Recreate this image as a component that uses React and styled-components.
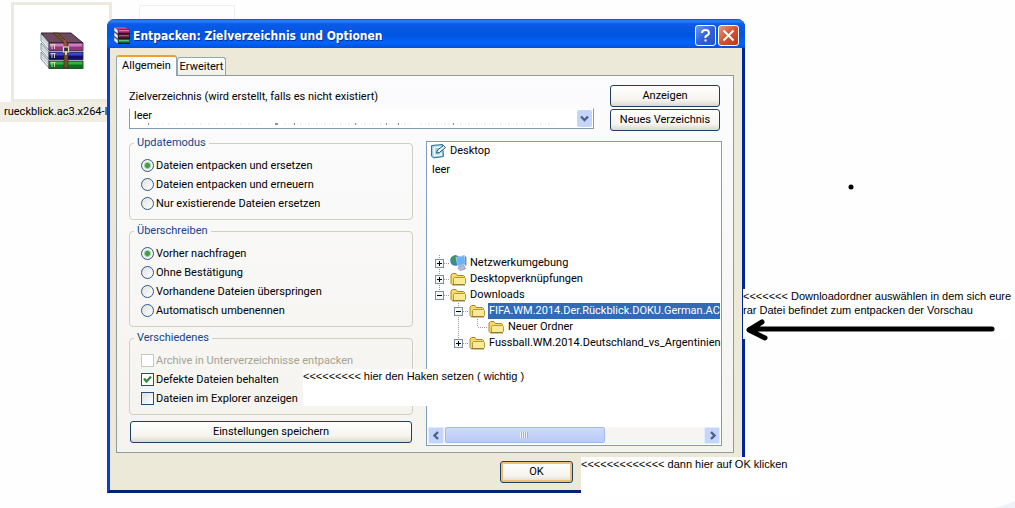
import React from 'react';
import styled, { createGlobalStyle, css } from 'styled-components';

const GlobalStyle = createGlobalStyle`
  * {
    box-sizing: border-box;
  }

  body {
    margin: 0;
    background: #fefefe;
    color: #000;
    font-family: Roboto, sans-serif;
    font-size: 11px;
    line-height: 14px;
    overflow: hidden;
  }

  button, input, select {
    font: inherit;
    color: inherit;
    margin: 0;
  }
`;

const Desktop = styled.main`
  position: relative;
  min-height: 100vh;
  padding: 19px 270px 14px 107px;
`;

const FileItem = styled.div`
  position: absolute;
  left: 0;
  top: 2px;
  width: 124px;
`;

const FileThumb = styled.div`
  display: flex;
  align-items: center;
  justify-content: center;
  width: 101px;
  height: 100px;
  margin-left: 11px;
  padding-bottom: 4px;
  border: 3px solid #eceadf;
  background: #fff;
`;

const FileName = styled.div`
  padding: 3px 4px;
  background: #f0eee4;
  white-space: nowrap;
  overflow: hidden;
`;

const GhostThumb = styled.div`
  position: absolute;
  left: 139px;
  top: 5px;
  width: 96px;
  height: 90px;
  border: 1px solid #f1f0ea;
`;

const CornerArt = styled.svg`
  position: absolute;
  right: 0;
  bottom: 0;
`;

const Dialog = styled.section`
  position: relative;
  border: 3px solid #0a3fc4;
  border-top: 0;
  border-right-color: #00259a;
  border-bottom-color: #00207c;
  border-radius: 8px 8px 0 0;
  background: #ece9d8;
`;

const TitleBar = styled.header`
  display: flex;
  align-items: center;
  gap: 2px;
  height: 29px;
  margin: 0 -3px;
  padding: 4px 6px 0 7px;
  border-radius: 8px 8px 0 0;
  background: linear-gradient(#0a4fc4 0, #2a86f8 2px, #0a5be6 5px, #0055e0 16px, #0463fb 24px, #0350d8 100%);
`;

const Title = styled.h1`
  flex: 1;
  margin: 0 0 0 1px;
  color: #fff;
  font-family: "DejaVu Sans Condensed", "DejaVu Sans", sans-serif;
  font-size: 12px;
  font-weight: 700;
  line-height: 18px;
  text-shadow: 1px 1px #0a318c;
  white-space: nowrap;
`;

const CaptionButton = styled.button`
  display: flex;
  width: 21px;
  height: 21px;
  padding: 0;
  align-items: center;
  justify-content: center;
  border: 1px solid #fff;
  border-radius: 3px;
  background: ${props => props.$close
    ? 'linear-gradient(135deg, #e89a84, #d9502e 50%, #b93a1c)'
    : 'linear-gradient(135deg, #6a9cf0, #2e62d8 50%, #2553c4)'};
`;

const Body = styled.div`
  padding: 7px 8px 0 6px;
`;

const Tabs = styled.div`
  display: flex;
  align-items: flex-end;
  height: 20px;
`;

const Tab = styled.button`
  min-width: 49px;
  height: 18px;
  padding: 1px 0 0;
  border: 1px solid #91a7b4;
  border-bottom: 0;
  border-radius: 3px 3px 0 0;
  background: linear-gradient(#fff, #f0f0ea);

  ${props => props.$active && css`
    z-index: 1;
    min-width: 61px;
    height: 21px;
    margin-bottom: -1px;
    padding: 0 0 2px;
    border-top: 2px solid #efa02c;
    background: #fcfcfe;
  `}
`;

const Panel = styled.div`
  padding: 9px 11px 6px 12px;
  border: 1px solid #919b9c;
  background: linear-gradient(#fcfcfe, #f4f3ee);
`;

const TargetRow = styled.div`
  display: flex;
  justify-content: space-between;
  gap: 16px;
  padding-right: 2px;
`;

const TargetField = styled.div`
  flex: 1;
  display: flex;
  flex-direction: column;
  gap: 4px;
  padding-top: 5px;
`;

const Combo = styled.div`
  position: relative;
  height: 21px;
  border: 1px solid #7f9db9;
  border-top-color: #fcfcfe;
  background: #fff;
`;

const ComboSelect = styled.select`
  display: block;
  width: 100%;
  height: 19px;
  padding: 0 20px 5px 4px;
  border: 0;
  background: transparent;
  appearance: none;
  outline: 0;
`;

const ComboArrow = styled.span`
  position: absolute;
  top: 1px;
  right: 1px;
  display: flex;
  align-items: center;
  justify-content: center;
  width: 15px;
  height: 17px;
  border-radius: 2px;
  background: #c5d4fa;
  pointer-events: none;
`;

const ComboSpecks = styled.svg`
  position: absolute;
  left: 4px;
  bottom: 3px;
  pointer-events: none;
`;

const SideButtons = styled.div`
  display: flex;
  flex-direction: column;
  gap: 2px;
  width: 110px;
`;

const PushButton = styled.button`
  height: 22px;
  padding: 0 8px;
  border: 1px solid #1c3f66;
  border-radius: 3px;
  background: linear-gradient(#fff, #f5f4ef 70%, #dcd8cc);
  box-shadow: inset 0 0 0 ${props => (props.$primary ? '2px #eec070' : '0 transparent')};
  text-align: center;
`;

const SaveButton = styled(PushButton)`
  margin: 2px 1px 0;
`;

const Columns = styled.div`
  display: grid;
  grid-template-columns: minmax(0, 284fr) minmax(0, 296fr);
  gap: 13px;
  padding-top: 5px;
`;

const Options = styled.div`
  display: flex;
  flex-direction: column;
  gap: 4px;
  padding-bottom: 3px;
`;

const Group = styled.fieldset`
  margin: 0;
  padding: 6px 11px 6px;
  border: 1px solid #d0d0bf;
  border-radius: 4px;
`;

const Legend = styled.legend`
  margin-left: -7px;
  padding: 0 3px;
  color: #14458c;
`;

const Choice = styled.label`
  display: flex;
  align-items: center;
  gap: 2px;
  height: 19px;
  color: ${props => (props.$disabled ? '#a5a392' : '#000')};
  white-space: nowrap;
`;

const Radio = styled.input`
  appearance: none;
  width: 13px;
  height: 13px;
  border: 1px solid #33597f;
  border-radius: 50%;
  background: linear-gradient(135deg, #dfe2e2, #fff);

  &:checked {
    background: radial-gradient(circle, #3f9c48 0 2px, #a5d0a4 3px, #eef4ee 4px);
  }
`;

const Check = styled.input`
  appearance: none;
  width: 13px;
  height: 13px;
  border: 1px solid ${props => (props.disabled ? '#cac8bb' : '#1c5180')};
  background: ${props => (props.disabled ? '#fff' : 'linear-gradient(135deg, #dcdfdf, #fff)')};

  &:checked {
    background: #fff url("data:image/svg+xml,%3Csvg xmlns='http://www.w3.org/2000/svg' width='11' height='11'%3E%3Cpath d='M2 4.5l2.5 3L9 2.5' fill='none' stroke='%232f8a3c' stroke-width='2.2'/%3E%3C/svg%3E");
  }
`;

const TreeBox = styled.div`
  display: flex;
  flex-direction: column;
  margin-top: 5px;
  padding: 1px;
  border: 1px solid #7f9db9;
  background: #fff;
`;

const Tree = styled.ul`
  flex: 1;
  margin: 0;
  padding: 0;
  list-style: none;
`;

const TreeRow = styled.li`
  display: flex;
  align-items: center;
  height: 16px;
  padding-left: ${props => (props.$root ? '2px' : '7px')};
  white-space: nowrap;

  svg {
    flex: none;
  }
`;

const TreeLabel = styled.span`
  flex: ${props => (props.$selected ? 1 : 'none')};
  margin-left: 2px;
  padding: 1px 0 1px 1px;
  color: ${props => (props.$selected ? '#fff' : '#000')};
  background: ${props => (props.$selected ? '#316ab5' : 'transparent')};
`;

const TreeBlank = styled.li`
  height: 96px;
  padding: 4px;
`;

const ScrollBar = styled.div`
  display: flex;
  gap: 1px;
  height: 17px;
  background: #f6f5f1;
`;

const ScrollButton = styled.button`
  display: flex;
  align-items: center;
  justify-content: center;
  width: 16px;
  padding: 0;
  border: 1px solid #e4ebfd;
  border-radius: 2px;
  background: #c4d4fb;
`;

const ScrollTrack = styled.div`
  flex: 1;
`;

const ScrollThumb = styled.div`
  display: flex;
  align-items: center;
  justify-content: center;
  width: 62%;
  height: 16px;
  border: 1px solid #a4baec;
  border-radius: 2px;
  background: linear-gradient(#cbdafd, #b9cbf5);
`;

const Footer = styled.footer`
  display: flex;
  justify-content: flex-end;
  height: 37px;
  padding: 8px 169px 7px 0;

  button {
    width: 73px;
  }
`;

const Note = styled.p`
  position: absolute;
  margin: 0;
  background: #fff;
  font-family: "Liberation Sans", sans-serif;
  white-space: nowrap;
`;

const KeepNote = styled(Note)`
  left: 193px;
  top: 350px;
  width: 224px;
  height: 37px;
`;

const FolderNote = styled(Note)`
  left: 100%;
  top: 270px;
  margin-left: 1px;
  height: 50px;
`;

const OkNote = styled(Note)`
  left: 471px;
  top: 438px;
  width: 220px;
  height: 40px;
`;

const Sketch = styled.svg`
  position: absolute;
  left: 100%;
  top: 160px;
`;

const updateModes = ['Dateien entpacken und ersetzen', 'Dateien entpacken und erneuern', 'Nur existierende Dateien ersetzen'];
const overwriteModes = ['Vorher nachfragen', 'Ohne Bestätigung', 'Vorhandene Dateien überspringen', 'Automatisch umbenennen'];
const misc = [
  { label: 'Archive in Unterverzeichnisse entpacken', disabled: true },
  { label: 'Defekte Dateien behalten', checked: true },
  { label: 'Dateien im Explorer anzeigen' }
];

// guides: one entry per indent step, the last one sits next to the icon
const folders = [
  { label: 'Netzwerkumgebung', guides: ['plus'], icon: 'network' },
  { label: 'Desktopverknüpfungen', guides: ['plus'] },
  { label: 'Downloads', guides: ['minus'], last: true },
  { label: 'FIFA.WM.2014.Der.Rückblick.DOKU.German.AC', guides: ['none', 'minus'], selected: true },
  { label: 'Neuer Ordner', guides: ['none', 'line', 'elbow'] },
  { label: 'Fussball.WM.2014.Deutschland_vs_Argentinien', guides: ['none', 'plus'], last: true }
];

function BooksIcon() {
  const books = [
    { y: 11, light: '#d07cc4', dark: '#8c3a80' },
    { y: 20, light: '#3c46c8', dark: '#10106c' },
    { y: 29, light: '#34b044', dark: '#0a701c' }
  ];
  return (
    <svg width="44" height="37" viewBox="0 0 44 37" aria-hidden="true">
      <path d="M1 1L31 1L43 11L10 11Z" fill="#6e4a60" stroke="#34202e" />
      {books.map(book => (
        <g key={book.y}>
          <path d={`M1 ${book.y - 9}L9 ${book.y}V${book.y + 7}L1 ${book.y - 2}Z`} fill="#e9f0f2" stroke="#56646c" strokeWidth="0.7" />
          <path d={`M2 ${book.y - 6}l7 8M2 ${book.y - 4}l7 8`} stroke="#93a4b0" strokeWidth="0.6" />
          <rect x="9" y={book.y} width="34" height="7.5" fill={book.light} stroke="#201828" strokeWidth="0.8" />
          <rect x="9" y={book.y + 3.5} width="34" height="3.8" fill={book.dark} />
          <path d={`M10.5 ${book.y + 1.5}h5M12 ${book.y + 2}v4M14.5 ${book.y + 2}v4`} stroke="#e4dcb4" strokeWidth="0.9" />
        </g>
      ))}
      <path d="M13 1H18L28 11V36H24V11Z" fill="#73512e" stroke="#35220f" strokeWidth="0.6" />
      <path d="M25 8V15" stroke="#b5502c" strokeWidth="1.5" />
      <rect x="23.5" y="15" width="5" height="5" fill="#303030" stroke="#d8d8c8" strokeWidth="1.2" />
      <path d="M26 19V23" stroke="#e8e0c0" strokeWidth="1.6" />
    </svg>
  );
}

function TitleIcon() {
  const books = [
    { y: 2, light: '#e06cae', dark: '#8e1f5c' },
    { y: 7, light: '#a8526e', dark: '#4a1630' },
    { y: 12, light: '#58c486', dark: '#12603c' }
  ];
  return (
    <svg width="16" height="17" viewBox="0 0 16 17" aria-hidden="true">
      <path d="M0 0H11L15 3H4Z" fill="#c04a80" />
      {books.map(book => (
        <g key={book.y}>
          <path d={`M0 ${book.y - 2}L4 ${book.y + 1}V${book.y + 5}L0 ${book.y + 2}Z`} fill="#e8eef4" stroke="#3a3038" strokeWidth="0.5" />
          <rect x="4" y={book.y} width="12" height="4" fill={book.dark} />
          <rect x="5" y={book.y + 1} width="10" height="1.4" fill={book.light} />
          <path d={`M4 ${book.y + 4.5}H16`} stroke="#1c1420" />
        </g>
      ))}
    </svg>
  );
}

function FolderIcon() {
  return (
    <svg width="17" height="16" viewBox="0 0 17 16" aria-hidden="true">
      <path d="M1 12.5V4L2.5 2.5H6L7.5 4.5H13.5L14.5 5.5V13.5H2Z" fill="#f4d868" stroke="#a8882c" />
      <path d="M3.5 13.5V7.5L4.5 6.5H14.5L15.5 7.5V12.5L14.5 13.5Z" fill="#fbea94" stroke="#b8983a" />
      <path d="M2.5 13.9H15" stroke="#86691c" />
    </svg>
  );
}

function NetworkIcon() {
  return (
    <svg width="17" height="16" viewBox="0 0 17 16" aria-hidden="true">
      <circle cx="5.5" cy="5.5" r="5.3" fill="#3a80c0" />
      <path d="M1 3Q4 -1 7 1L5 4L6 8L3 9Q0 7 1 3Z" fill="#3f9468" />
      <path d="M6 2.5L14.5 0.5L15.5 9L8 11Z" fill="#66b4f6" stroke="#b4c4e4" />
      <path d="M15 1L16.5 2V10L15 11Z" fill="#7c8cc0" />
      <path d="M9 11.5L14 10.5L15.5 14L10 15.5L8 13.5Z" fill="#b4bce0" stroke="#7780a8" strokeWidth="0.6" />
    </svg>
  );
}

function DesktopIcon() {
  return (
    <svg width="17" height="16" viewBox="0 0 17 16" aria-hidden="true">
      <path d="M1.5 2.5L12.5 1.5L13.5 13.5L3.5 15L1.5 13Z" fill="#a4d0e4" stroke="#2f6f98" />
      <path d="M4 4.5L10.5 4V6M4 4.5L4.5 12.5L11 12V9.5" fill="none" stroke="#f6fcff" strokeWidth="1.6" />
      <path d="M6.5 10L7.5 7L13.5 2.5L15.5 4.5L9.5 9.5Z" fill="#e8f4fa" stroke="#1d5880" />
    </svg>
  );
}

function Guide({ kind, end, wide }) {
  const boxed = kind === 'plus' || kind === 'minus';
  return (
    <svg width={wide ? 19 : 15} height="16" aria-hidden="true">
      {kind !== 'none' && (
        <path
          d={kind === 'line' ? 'M4.5 0V16' : `M4.5 0V${end || kind === 'elbow' ? 8 : 16}M5 8.5H15`}
          fill="none"
          stroke="#9a9a9a"
          strokeDasharray="1 1"
        />
      )}
      {boxed && (
        <>
          <rect x="0.5" y="4.5" width="8" height="8" fill="#f6f6f2" stroke="#7b8fa5" />
          <path d={kind === 'plus' ? 'M2 8.5H7M4.5 6V11' : 'M2 8.5H7'} stroke="#000" />
        </>
      )}
    </svg>
  );
}

function Chevron({ d }) {
  return (
    <svg width="9" height="9" viewBox="0 0 9 9" aria-hidden="true">
      <path d={d} fill="none" stroke="#4d6185" strokeWidth="2.4" />
    </svg>
  );
}

function RadioGroup({ title, name, options }) {
  return (
    <Group>
      <Legend>{title}</Legend>
      {options.map((option, i) => (
        <Choice key={option}>
          <Radio type="radio" name={name} defaultChecked={i === 0} />
          {option}
        </Choice>
      ))}
    </Group>
  );
}

function FolderTree() {
  return (
    <TreeBox>
      <Tree>
        <TreeRow $root>
          <DesktopIcon />
          <TreeLabel>Desktop</TreeLabel>
        </TreeRow>
        <TreeBlank>leer</TreeBlank>
        {folders.map(folder => (
          <TreeRow key={folder.label}>
            {folder.guides.map((kind, i) => (
              <Guide key={i} kind={kind} end={folder.last} wide={i < folder.guides.length - 1} />
            ))}
            {folder.icon === 'network' ? <NetworkIcon /> : <FolderIcon />}
            <TreeLabel $selected={folder.selected}>{folder.label}</TreeLabel>
          </TreeRow>
        ))}
      </Tree>
      <ScrollBar>
        <ScrollButton type="button" aria-label="Nach links">
          <Chevron d="M6 1L2.5 4.5L6 8" />
        </ScrollButton>
        <ScrollTrack>
          <ScrollThumb>
            <svg width="9" height="6" aria-hidden="true">
              <path d="M0.5 0V6M2.5 0V6M4.5 0V6M6.5 0V6" stroke="#eef4fe" />
              <path d="M1.5 0V6M3.5 0V6M5.5 0V6M7.5 0V6" stroke="#8cb0f8" />
            </svg>
          </ScrollThumb>
        </ScrollTrack>
        <ScrollButton type="button" aria-label="Nach rechts">
          <Chevron d="M3 1L6.5 4.5L3 8" />
        </ScrollButton>
      </ScrollBar>
    </TreeBox>
  );
}

function App() {
  return (
    <>
      <GlobalStyle />
      <Desktop>
        <FileItem>
          <FileThumb>
            <BooksIcon />
          </FileThumb>
          <FileName>rueckblick.ac3.x264-I</FileName>
        </FileItem>
        <GhostThumb />
        <CornerArt width="28" height="10" aria-hidden="true">
          <path d="M6 10Q20 7 28 3V10Z" fill="#f0f2f9" />
        </CornerArt>

        <Dialog>
          <TitleBar>
            <TitleIcon />
            <Title>Entpacken: Zielverzeichnis und Optionen</Title>
            <CaptionButton type="button" aria-label="Hilfe">
              <svg width="13" height="15" viewBox="0 0 13 15" aria-hidden="true">
                <path d="M3 5Q3 2 6.5 2T10 5Q10 6.5 8 7.5T6.5 10" fill="none" stroke="#fff" strokeWidth="2" />
                <rect x="5.5" y="11.5" width="2" height="2" fill="#fff" />
              </svg>
            </CaptionButton>
            <CaptionButton type="button" aria-label="Schließen" $close>
              <svg width="13" height="13" viewBox="0 0 13 13" aria-hidden="true">
                <path d="M1.5 1.5L11.5 11.5M11.5 1.5L1.5 11.5" stroke="#fff" strokeWidth="2" />
              </svg>
            </CaptionButton>
          </TitleBar>

          <Body>
            <Tabs>
              <Tab type="button" $active>Allgemein</Tab>
              <Tab type="button">Erweitert</Tab>
            </Tabs>
            <Panel>
              <TargetRow>
                <TargetField>
                  <label htmlFor="target">Zielverzeichnis (wird erstellt, falls es nicht existiert)</label>
                  <Combo>
                    <ComboSelect id="target">
                      <option>leer</option>
                    </ComboSelect>
                    <ComboSpecks width="440" height="2" aria-hidden="true">
                      <path d="M15 1H30M34 1H128M150 1H276M286 1H420" stroke="#e4e4e4" strokeDasharray="2 3 1 2" />
                      <path d="M14 1h1M141 1h3M160 1h1M221 1h1M252 1h1M264 1h1M319 1h1" stroke="#222" />
                    </ComboSpecks>
                    <ComboArrow>
                      <Chevron d="M1 2.5L4.5 6L8 2.5" />
                    </ComboArrow>
                  </Combo>
                </TargetField>
                <SideButtons>
                  <PushButton type="button">Anzeigen</PushButton>
                  <PushButton type="button">Neues Verzeichnis</PushButton>
                </SideButtons>
              </TargetRow>

              <Columns>
                <Options>
                  <RadioGroup title="Updatemodus" name="update" options={updateModes} />
                  <RadioGroup title="Überschreiben" name="overwrite" options={overwriteModes} />
                  <Group>
                    <Legend>Verschiedenes</Legend>
                    {misc.map(item => (
                      <Choice key={item.label} $disabled={item.disabled}>
                        <Check type="checkbox" disabled={item.disabled} defaultChecked={item.checked} />
                        {item.label}
                      </Choice>
                    ))}
                  </Group>
                  <SaveButton type="button">Einstellungen speichern</SaveButton>
                </Options>
                <FolderTree />
              </Columns>
            </Panel>
          </Body>
          <Footer>
            <PushButton type="button" $primary>OK</PushButton>
          </Footer>

          <KeepNote>&lt;&lt;&lt;&lt;&lt;&lt;&lt;&lt;&lt; hier den Haken setzen ( wichtig )</KeepNote>
          <FolderNote>
            &lt;&lt;&lt;&lt;&lt;&lt;&lt; Downloadordner auswählen in dem sich eure
            <br />
            rar Datei befindet zum entpacken der Vorschau
          </FolderNote>
          <OkNote>&lt;&lt;&lt;&lt;&lt;&lt;&lt;&lt;&lt;&lt;&lt;&lt;&lt; dann hier auf OK klicken</OkNote>
          <Sketch width="260" height="170" aria-hidden="true">
            <circle cx="109" cy="8" r="2.5" />
            <path d="M250 150H8M20 143L7 151L23 159" fill="none" stroke="#000" strokeWidth="5" strokeLinecap="round" strokeLinejoin="round" />
          </Sketch>
        </Dialog>
      </Desktop>
    </>
  );
}

export default App;
